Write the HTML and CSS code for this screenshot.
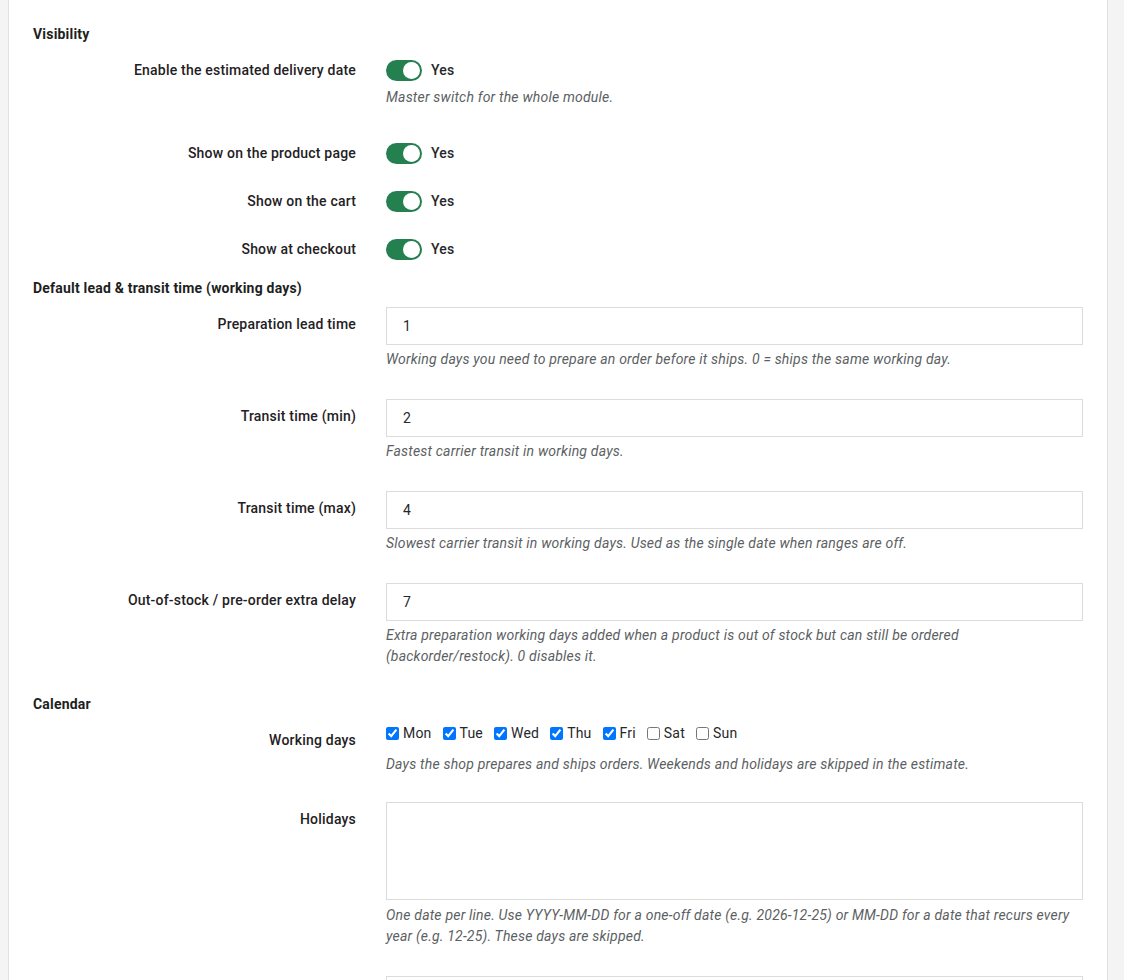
FILE: index.html
```html
<!DOCTYPE html>
<html lang="en">
<head>
    <meta charset="UTF-8">
    <meta name="viewport" content="width=device-width, initial-scale=1.0">
    <title>Estimated delivery date - settings</title>
    <link rel="stylesheet" href="styles.css">
</head>
<body>
    <div class="panel">
        <section class="group">
            <h3 class="group-title">Visibility</h3>

            <div class="row">
                <label class="row-label">Enable the estimated delivery date</label>
                <div class="row-control">
                    <div class="switch-line">
                        <span class="switch on"><span class="knob"></span></span>
                        <span class="switch-text">Yes</span>
                    </div>
                    <p class="help help-switch">Master switch for the whole module.</p>
                </div>
            </div>

            <div class="row">
                <label class="row-label">Show on the product page</label>
                <div class="row-control">
                    <div class="switch-line">
                        <span class="switch on"><span class="knob"></span></span>
                        <span class="switch-text">Yes</span>
                    </div>
                </div>
            </div>

            <div class="row">
                <label class="row-label">Show on the cart</label>
                <div class="row-control">
                    <div class="switch-line">
                        <span class="switch on"><span class="knob"></span></span>
                        <span class="switch-text">Yes</span>
                    </div>
                </div>
            </div>

            <div class="row">
                <label class="row-label">Show at checkout</label>
                <div class="row-control">
                    <div class="switch-line">
                        <span class="switch on"><span class="knob"></span></span>
                        <span class="switch-text">Yes</span>
                    </div>
                </div>
            </div>
        </section>

        <section class="group">
            <h3 class="group-title">Default lead &amp; transit time (working days)</h3>

            <div class="row">
                <label class="row-label" for="lead">Preparation lead time</label>
                <div class="row-control">
                    <input class="field" id="lead" type="text" value="1">
                    <p class="help">Working days you need to prepare an order before it ships. 0 = ships the same working day.</p>
                </div>
            </div>

            <div class="row">
                <label class="row-label" for="tmin">Transit time (min)</label>
                <div class="row-control">
                    <input class="field" id="tmin" type="text" value="2">
                    <p class="help">Fastest carrier transit in working days.</p>
                </div>
            </div>

            <div class="row">
                <label class="row-label" for="tmax">Transit time (max)</label>
                <div class="row-control">
                    <input class="field" id="tmax" type="text" value="4">
                    <p class="help">Slowest carrier transit in working days. Used as the single date when ranges are off.</p>
                </div>
            </div>

            <div class="row">
                <label class="row-label" for="oos">Out-of-stock / pre-order extra delay</label>
                <div class="row-control">
                    <input class="field" id="oos" type="text" value="7">
                    <p class="help">Extra preparation working days added when a product is out of stock but can still be ordered (backorder/restock). 0 disables it.</p>
                </div>
            </div>
        </section>

        <section class="group">
            <h3 class="group-title">Calendar</h3>

            <div class="row">
                <label class="row-label">Working days</label>
                <div class="row-control">
                    <div class="days">
                        <label class="day"><input type="checkbox" checked> Mon</label>
                        <label class="day"><input type="checkbox" checked> Tue</label>
                        <label class="day"><input type="checkbox" checked> Wed</label>
                        <label class="day"><input type="checkbox" checked> Thu</label>
                        <label class="day"><input type="checkbox" checked> Fri</label>
                        <label class="day"><input type="checkbox"> Sat</label>
                        <label class="day"><input type="checkbox"> Sun</label>
                    </div>
                    <p class="help">Days the shop prepares and ships orders. Weekends and holidays are skipped in the estimate.</p>
                </div>
            </div>

            <div class="row">
                <label class="row-label" for="holidays">Holidays</label>
                <div class="row-control">
                    <textarea class="field area" id="holidays"></textarea>
                    <p class="help">One date per line. Use YYYY-MM-DD for a one-off date (e.g. 2026-12-25) or MM-DD for a date that recurs every year (e.g. 12-25). These days are skipped.</p>
                </div>
            </div>

            <div class="row">
                <label class="row-label"></label>
                <div class="row-control">
                    <input class="field" type="text" value="">
                </div>
            </div>
        </section>
    </div>
</body>
</html>
```

FILE: styles.css
```css
* {
    box-sizing: border-box;
}
body {
    margin: 0;
    padding: 0 16px 0 8px;
    background: #f4f4f4;
    font-family: Roboto, 'Liberation Sans', Arial, sans-serif;
    font-size: 14px;
    line-height: 21px;
    letter-spacing: 0.2px;
    color: #25282b;
}
.panel {
    background: #fff;
    border-left: 1px solid #e2e2e2;
    border-right: 1px solid #e2e2e2;
    padding: 24px 24px 40px 24px;
    min-height: 980px;
}
.group {
    margin-bottom: 18px;
}
.group-title {
    margin: 0 0 8px;
    font-size: 14px;
    line-height: 21px;
    font-weight: 700;
    color: #1d1f21;
}
.row {
    display: grid;
    grid-template-columns: 323px 1fr;
    column-gap: 30px;
    margin-bottom: 20px;
}
.row:last-child {
    margin-bottom: 0;
}
.row-label {
    text-align: right;
    padding-top: 7px;
    font-weight: 500;
    color: #1f2124;
}
.row-control {
    min-width: 0;
}
.switch-line {
    display: flex;
    align-items: center;
    gap: 9px;
    padding-top: 7px;
    height: 28px;
}
.switch {
    position: relative;
    display: inline-block;
    width: 36px;
    height: 21px;
    border-radius: 11px;
    background: #bbb;
}
.switch.on {
    background: #25804f;
}
.knob {
    position: absolute;
    top: 2px;
    left: 2px;
    width: 17px;
    height: 17px;
    border-radius: 50%;
    background: #fff;
}
.switch.on .knob {
    left: 17px;
}
.switch-text {
    font-weight: 500;
}
.help {
    margin: 5px 0 9px;
    font-style: italic;
    color: #5c5f63;
}
.help-switch {
    margin-top: 6px;
    margin-bottom: 8px;
}
.field {
    display: block;
    width: 100%;
    height: 38px;
    margin: 0;
    padding: 0 16px;
    border: 1px solid #dcdcdc;
    border-radius: 0;
    font-family: inherit;
    font-size: 14px;
    letter-spacing: 0.2px;
    color: #25282b;
    background: #fff;
}
.field + .help {
    margin-top: 4px;
}
.area {
    height: 98px;
    padding: 8px 16px;
    resize: none;
}
.area + .help {
    margin-top: 5px;
}
.days {
    display: flex;
    flex-wrap: wrap;
    padding-bottom: 6px;
}
.day {
    display: inline-flex;
    align-items: center;
    margin-right: 11px;
    height: 21px;
}
.day input {
    margin: 0 4px 0 0;
    width: 13px;
    height: 13px;
}
.days + .help {
    margin-top: 4px;
    margin-bottom: 7px;
}
```
